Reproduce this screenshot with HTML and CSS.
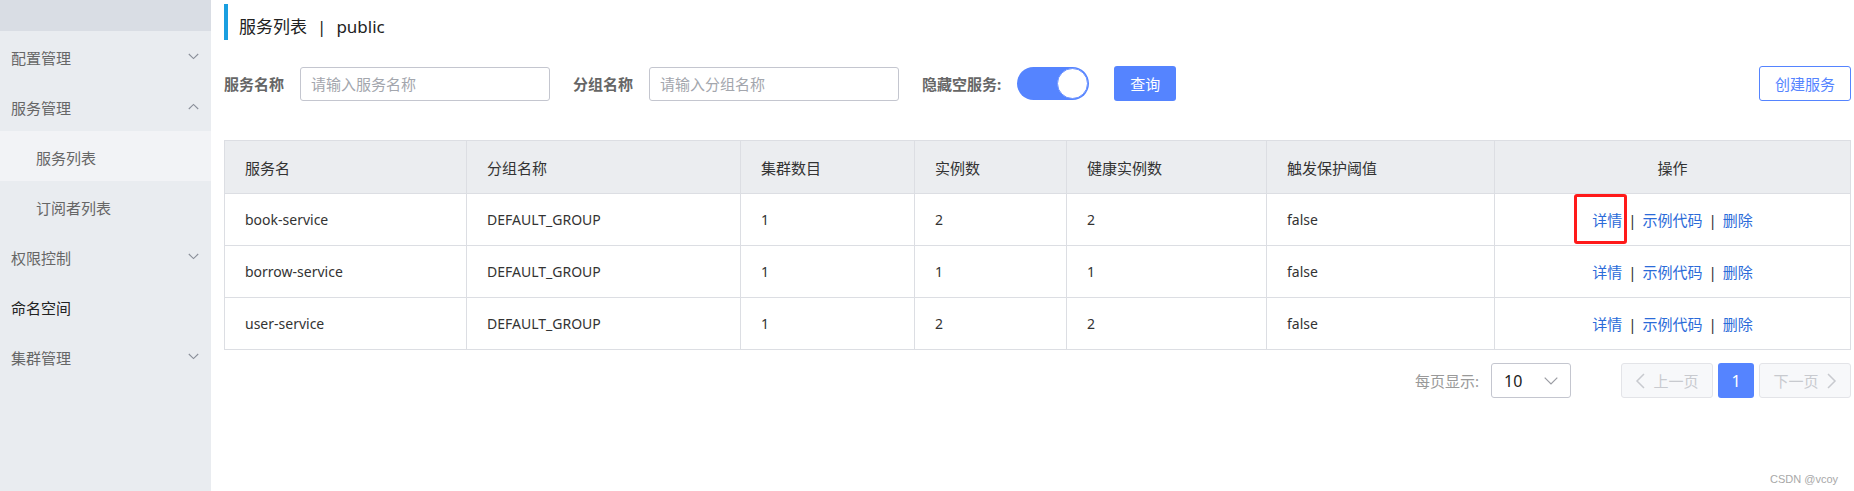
FILE: index.html
```html
<!DOCTYPE html>
<html lang="zh-CN">
<head>
<meta charset="utf-8">
<title>服务列表</title>
<link rel="stylesheet" href="styles.css">
</head>
<body>
<div class="app">
  <aside class="sidebar">
    <div class="side-top"></div>
    <ul class="menu">
      <li class="item"><span class="label">配置管理</span><svg class="chev" width="11" height="7" viewBox="0 0 11 7"><path d="M0.8 1 L5.5 5.6 L10.2 1" fill="none" stroke="#8a8f99" stroke-width="1.1"/></svg></li>
      <li class="item"><span class="label">服务管理</span><svg class="chev" width="11" height="7" viewBox="0 0 11 7"><path d="M0.8 6 L5.5 1.4 L10.2 6" fill="none" stroke="#8a8f99" stroke-width="1.1"/></svg></li>
      <li class="item sub active"><span class="label">服务列表</span></li>
      <li class="item sub"><span class="label">订阅者列表</span></li>
      <li class="item"><span class="label">权限控制</span><svg class="chev" width="11" height="7" viewBox="0 0 11 7"><path d="M0.8 1 L5.5 5.6 L10.2 1" fill="none" stroke="#8a8f99" stroke-width="1.1"/></svg></li>
      <li class="item leaf"><span class="label">命名空间</span></li>
      <li class="item"><span class="label">集群管理</span><svg class="chev" width="11" height="7" viewBox="0 0 11 7"><path d="M0.8 1 L5.5 5.6 L10.2 1" fill="none" stroke="#8a8f99" stroke-width="1.1"/></svg></li>
    </ul>
  </aside>
  <main class="main">
    <div class="title"><span class="title-text">服务列表<span class="title-sep">|</span>public</span></div>
    <div class="filters">
      <span class="f-label">服务名称</span>
      <div class="f-input">请输入服务名称</div>
      <span class="f-label">分组名称</span>
      <div class="f-input">请输入分组名称</div>
      <span class="f-label">隐藏空服务:</span>
      <div class="switch"><span class="knob"></span></div>
      <button class="btn-primary">查询</button>
      <button class="btn-outline">创建服务</button>
    </div>
    <table class="grid">
      <colgroup>
        <col style="width:242px"><col style="width:274px"><col style="width:174px"><col style="width:152px"><col style="width:200px"><col style="width:228px"><col>
      </colgroup>
      <thead>
        <tr><th>服务名</th><th>分组名称</th><th>集群数目</th><th>实例数</th><th>健康实例数</th><th>触发保护阈值</th><th class="center">操作</th></tr>
      </thead>
      <tbody>
        <tr><td>book-service</td><td>DEFAULT_GROUP</td><td>1</td><td>2</td><td>2</td><td>false</td>
          <td class="center actions"><a class="link marked">详情</a><span class="sep">|</span><a class="link">示例代码</a><span class="sep">|</span><a class="link">删除</a></td></tr>
        <tr><td>borrow-service</td><td>DEFAULT_GROUP</td><td>1</td><td>1</td><td>1</td><td>false</td>
          <td class="center actions"><a class="link">详情</a><span class="sep">|</span><a class="link">示例代码</a><span class="sep">|</span><a class="link">删除</a></td></tr>
        <tr><td>user-service</td><td>DEFAULT_GROUP</td><td>1</td><td>2</td><td>2</td><td>false</td>
          <td class="center actions"><a class="link">详情</a><span class="sep">|</span><a class="link">示例代码</a><span class="sep">|</span><a class="link">删除</a></td></tr>
      </tbody>
    </table>
    <div class="pager">
      <span class="p-label">每页显示:</span>
      <div class="p-select"><span>10</span><svg width="14" height="8" viewBox="0 0 14 8"><path d="M0.7 0.7 L7 7 L13.3 0.7" fill="none" stroke="#9a9ca3" stroke-width="1.2"/></svg></div>
      <div class="p-buttons">
        <button class="p-btn disabled"><svg width="10" height="16" viewBox="0 0 10 16"><path d="M9 1 L2 8 L9 15" fill="none" stroke="#c8cacf" stroke-width="1.5"/></svg><span>上一页</span></button>
        <button class="p-num">1</button>
        <button class="p-btn disabled"><span>下一页</span><svg width="10" height="16" viewBox="0 0 10 16"><path d="M1 1 L8 8 L1 15" fill="none" stroke="#c8cacf" stroke-width="1.5"/></svg></button>
      </div>
    </div>
  </main>
  <div class="watermark">CSDN @vcoy</div>
</div>
</body>
</html>
```
FILE: styles.css
```css
* { box-sizing: border-box; }
html, body { margin: 0; padding: 0; background: #fff; }
body {
  font-family: "Noto Sans", "Noto Sans CJK SC", sans-serif;
  color: #333;
  width: 1854px;
  height: 491px;
  overflow: hidden;
}
.app {
  display: flex;
  height: 491px;
  position: relative;
}
.sidebar {
  width: 211px;
  flex: 0 0 211px;
  background: #e9ecf0;
  display: flex;
  flex-direction: column;
}
.side-top {
  height: 31px;
  background: #d9dde4;
}
.menu {
  list-style: none;
  margin: 0;
  padding: 0;
}
.item {
  height: 50px;
  display: flex;
  align-items: center;
  justify-content: space-between;
  padding: 0 12px 0 11px;
  font-size: 15px;
  color: #666;
}
.item .label {
  padding-top: 4px;
  line-height: 20px;
}
.item.sub { padding-left: 36px; }
.item.active { background: #f2f3f6; }
.item.leaf { color: #222; }
.chev { display: block; }

.main {
  flex: 1;
  padding: 4px 3px 0 13px;
  display: flex;
  flex-direction: column;
}
.title {
  height: 36px;
  border-left: 4px solid #1a9fe0;
  padding-left: 11px;
  display: flex;
  align-items: center;
  font-size: 17px;
  color: #222;
}
.title-text { padding-top: 9px; line-height: 24px; }
.title-sep { margin: 0 10px; }

.filters {
  margin-top: 26px;
  height: 35px;
  display: flex;
  align-items: center;
}
.f-label {
  font-size: 15px;
  font-weight: bold;
  color: #666;
  margin-right: 16px;
}
.f-input {
  width: 250px;
  height: 34px;
  border: 1px solid #c4c6cf;
  border-radius: 3px;
  padding: 0 10px;
  font-size: 15px;
  line-height: 32px;
  color: #a3a6ad;
  margin-right: 23px;
}
.switch {
  width: 72px;
  height: 33px;
  border-radius: 17px;
  background: #5584ff;
  display: flex;
  justify-content: flex-end;
  align-items: center;
  padding: 1px;
  margin-right: 25px;
}
.knob {
  width: 31px;
  height: 31px;
  border-radius: 50%;
  background: #fff;
  border: 1px solid #6f95ff;
}
.btn-primary {
  width: 62px;
  height: 35px;
  border: none;
  border-radius: 3px;
  background: #5584ff;
  color: #fff;
  font-family: inherit;
  font-size: 15px;
  padding: 0;
}
.btn-outline {
  margin-left: auto;
  width: 92px;
  height: 35px;
  border: 1px solid #5584ff;
  border-radius: 3px;
  background: #fff;
  color: #5584ff;
  font-family: inherit;
  font-size: 15px;
  padding: 0;
}

.grid {
  margin-top: 39px;
  width: 100%;
  table-layout: fixed;
  border-collapse: collapse;
  font-size: 14px;
}
.grid th, .grid td {
  border: 1px solid #dcdee3;
  padding: 0 20px;
  text-align: left;
  white-space: nowrap;
}
.grid th {
  height: 53px;
  background: #ebedf0;
  font-weight: normal;
  font-size: 15px;
  color: #333;
}
.grid td {
  height: 52px;
  color: #333;
}
.grid .center { text-align: center; }
.actions { font-size: 15px; }
.link { color: #2b6bd9; text-decoration: none; }
.sep { margin: 0 6px; color: #333; }
.marked {
  position: relative;
  display: inline-block;
}
.marked::after {
  content: "";
  position: absolute;
  left: -18px;
  right: -5px;
  top: -15px;
  bottom: -14px;
  border: 3px solid #ff1a1a;
  border-radius: 3px;
}

.pager {
  margin-top: 13px;
  display: flex;
  justify-content: flex-end;
  align-items: center;
  height: 35px;
}
.p-label {
  font-size: 15px;
  color: #999;
}
.p-select {
  margin-left: 12px;
  width: 80px;
  height: 35px;
  border: 1px solid #c4c6cf;
  border-radius: 3px;
  display: flex;
  align-items: center;
  justify-content: space-between;
  padding: 0 12px;
  font-size: 16px;
  color: #222;
}
.p-buttons {
  margin-left: 50px;
  display: flex;
  gap: 5px;
}
.p-btn {
  width: 92px;
  height: 35px;
  border: 1px solid #e3e4e8;
  border-radius: 3px;
  background: #f7f8fa;
  color: #c8cacf;
  font-family: inherit;
  font-size: 15px;
  display: flex;
  align-items: center;
  justify-content: center;
  gap: 8px;
  padding: 0;
}
.p-num {
  width: 36px;
  height: 35px;
  border: none;
  border-radius: 3px;
  background: #5584ff;
  color: #fff;
  font-family: inherit;
  font-size: 16px;
  padding: 0;
}
.watermark {
  position: absolute;
  right: 16px;
  bottom: 6px;
  font-family: "Liberation Sans", sans-serif;
  font-size: 11px;
  color: #a8a8a8;
}
```
